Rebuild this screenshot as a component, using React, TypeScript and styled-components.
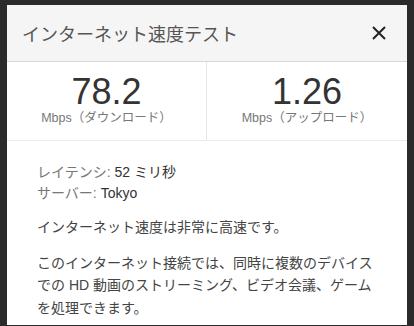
import React from "react";
import styled, { createGlobalStyle } from "styled-components";

const Global = createGlobalStyle`
  html, body { margin: 0; padding: 0; background: #2b2b2b; }
  body { font-family: "Liberation Sans", Arial, "Noto Sans CJK JP", sans-serif; }
`;

const Frame = styled.div`
  width: 414px;
  height: 326px;
  box-sizing: border-box;
  padding: 5px 7px 1px 7px;
  background: #2b2b2b;
  overflow: hidden;
`;

const Card = styled.div`
  height: 100%;
  background: #fff;
  display: flex;
  flex-direction: column;
  overflow: hidden;
`;

const Header = styled.div`
  flex-shrink: 0;
  height: 57px;
  box-sizing: border-box;
  background: #f5f5f5;
  border-bottom: 1px solid #d6d6d6;
  display: flex;
  align-items: center;
  justify-content: space-between;
  padding: 0 20px 0 15px;
`;

const Title = styled.h1`
  margin: 0;
  font-size: 18px;
  font-weight: 400;
  color: #555;
`;

const Close = styled.button`
  border: 0;
  background: none;
  padding: 0;
  width: 16px;
  height: 16px;
  display: flex;
  align-items: center;
  justify-content: center;
  cursor: pointer;
`;

const Stats = styled.div`
  flex-shrink: 0;
  display: grid;
  grid-template-columns: 200px 1fr;
  border-bottom: 1px solid #ececec;
`;

const Stat = styled.div<{ $divider?: boolean }>`
  height: 78px;
  display: flex;
  flex-direction: column;
  align-items: center;
  padding-top: 12px;
  box-sizing: border-box;
  border-right: ${(p) => (p.$divider ? "1px solid #e6e6e6" : "none")};
`;

const Value = styled.div`
  font-size: 36px;
  line-height: 36px;
  color: #333;
`;

const Unit = styled.div`
  font-size: 12.5px;
  line-height: 16px;
  color: #777;
`;

const Body = styled.div`
  flex-shrink: 0;
  padding: 21px 30px 0 30px;
  font-size: 14px;
  color: #333;
`;

const Line = styled.div`
  line-height: 20.5px;
`;

const Label = styled.span`
  color: #777;
`;

const Para = styled.p`
  margin: 13px 0 0 0;
  line-height: 22.5px;
  color: #444;
`;

export default function App() {
  return (
    <>
      <Global />
      <Frame>
        <Card>
          <Header>
            <Title>インターネット速度テスト</Title>
            <Close aria-label="閉じる">
              <svg width="14" height="14" viewBox="0 0 14 14">
                <path d="M1 1L13 13M13 1L1 13" stroke="#222" strokeWidth="2" />
              </svg>
            </Close>
          </Header>
          <Stats>
            <Stat $divider>
              <Value>78.2</Value>
              <Unit>Mbps（ダウンロード）</Unit>
            </Stat>
            <Stat>
              <Value>1.26</Value>
              <Unit>Mbps（アップロード）</Unit>
            </Stat>
          </Stats>
          <Body>
            <Line>
              <Label>レイテンシ: </Label>52 ミリ秒
            </Line>
            <Line>
              <Label>サーバー: </Label>Tokyo
            </Line>
            <Para>インターネット速度は非常に高速です。</Para>
            <Para>
              このインターネット接続では、同時に複数のデバイスでの HD 動画のストリーミング、ビデオ会議、ゲームを処理できます。
            </Para>
          </Body>
        </Card>
      </Frame>
    </>
  );
}
